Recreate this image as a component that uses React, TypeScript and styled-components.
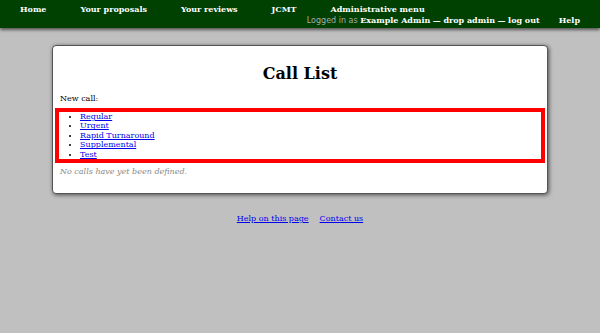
import styled, { createGlobalStyle } from "styled-components";

const Global = createGlobalStyle`
  html, body {
    margin: 0;
    padding: 0;
    background: #c0c0c0;
    font-family: "DejaVu Serif", serif;
    font-size: 8px;
    color: #000;
  }
`;

const TopBar = styled.div`
  background: #004000;
  height: 28px;
  box-sizing: border-box;
  padding: 4px 20px 0;
  box-shadow: 0 2px 3px rgba(0, 0, 0, 0.55);
  display: flex;
  flex-wrap: wrap;
  line-height: 10px;
`;

const NavGroup = styled.div<{ $right?: boolean }>`
  display: flex;
  gap: ${(p) => (p.$right ? "19px" : "34px")};
  width: ${(p) => (p.$right ? "100%" : "auto")};
  justify-content: ${(p) => (p.$right ? "flex-end" : "flex-start")};
  margin-top: ${(p) => (p.$right ? "-1px" : "0")};
`;

const NavItem = styled.span`
  color: #fff;
  font-weight: bold;
  white-space: nowrap;
`;

const Login = styled.span`
  color: #aaa;
  font-family: "DejaVu Sans", sans-serif;
  white-space: nowrap;
  b {
    color: #fff;
    font-family: "DejaVu Serif", serif;
  }
`;

const Card = styled.div`
  margin: 17px auto 0;
  width: 496px;
  box-sizing: border-box;
  background: #fff;
  border: 1px solid #555;
  border-radius: 4px;
  box-shadow: 1px 1px 4px rgba(0, 0, 0, 0.6);
  padding: 18px 7px 16px;
`;

const Title = styled.h1`
  margin: 0 0 11px;
  font-size: 16px;
  line-height: 19px;
  text-align: center;
`;

const Para = styled.p<{ $muted?: boolean }>`
  margin: 0;
  line-height: 10px;
  color: ${(p) => (p.$muted ? "#888" : "#000")};
  font-style: ${(p) => (p.$muted ? "italic" : "normal")};
`;

const CallTypes = styled.ul`
  margin: 4px -5px 4px;
  border: 4px solid #f00;
  padding: 0 0 0 21px;
  list-style: disc;
`;

const CallType = styled.li`
  height: 9.4px;
  line-height: 9.4px;
`;

const Link = styled.a`
  color: #0000ee;
  text-decoration: underline;
`;

const Footer = styled.div`
  margin-top: 20px;
  display: flex;
  justify-content: center;
  gap: 11px;
  line-height: 10px;
`;

const calls = ["Regular", "Urgent", "Rapid Turnaround", "Supplemental", "Test"];

const App = () => {
  return (
    <>
      <Global />
      <TopBar>
        <NavGroup>
          <NavItem>Home</NavItem>
          <NavItem>Your proposals</NavItem>
          <NavItem>Your reviews</NavItem>
          <NavItem>JCMT</NavItem>
          <NavItem>Administrative menu</NavItem>
        </NavGroup>
        <NavGroup $right>
          <Login>
            Logged in as <b>Example Admin</b> <b>—</b> <b>drop admin</b> <b>—</b> <b>log out</b>
          </Login>
          <NavItem>Help</NavItem>
        </NavGroup>
      </TopBar>
      <Card>
        <Title>Call List</Title>
        <Para>New call:</Para>
        <CallTypes>
          {calls.map((c) => (
            <CallType key={c}>
              <Link href="#">{c}</Link>
            </CallType>
          ))}
        </CallTypes>
        <Para $muted>No calls have yet been defined.</Para>
      </Card>
      <Footer>
        <Link href="#">Help on this page</Link>
        <Link href="#">Contact us</Link>
      </Footer>
    </>
  );
};

export default App;
